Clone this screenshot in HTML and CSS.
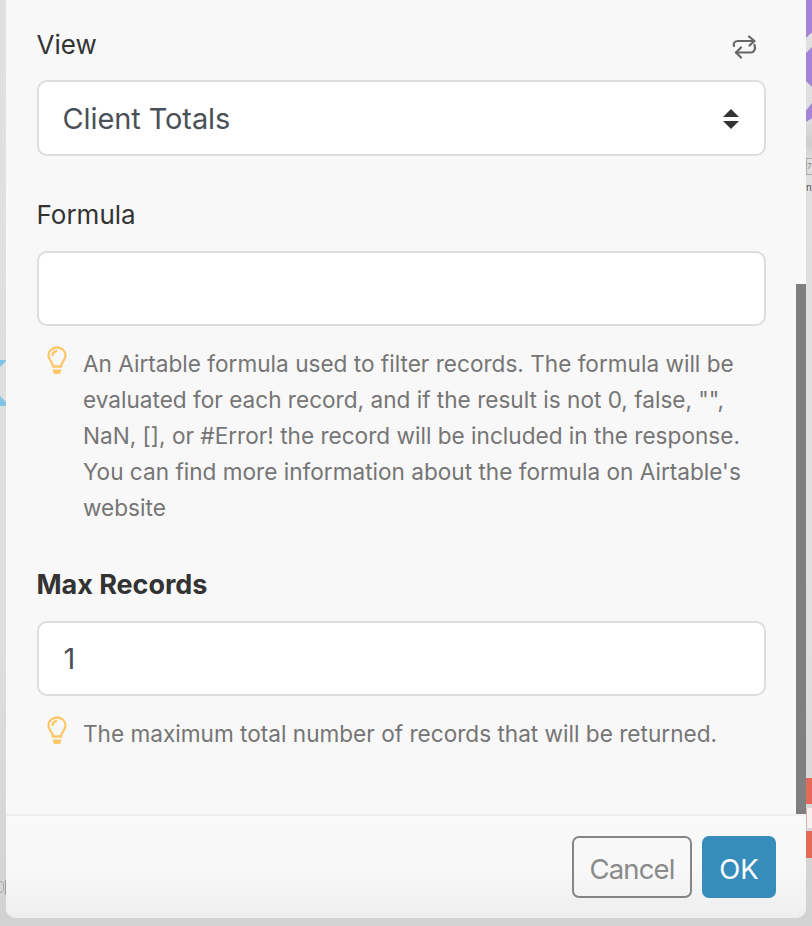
FILE: index.html
```html
<!DOCTYPE html>
<html lang="en">
<head>
<meta charset="utf-8">
<title>Airtable module settings</title>
<link rel="stylesheet" href="styles.css">
</head>
<body>
<div class="backdrop">
  <div class="deco-purple deco-p1"></div>
  <div class="deco-purple deco-p2"></div>
  <div class="deco-purple deco-p3"></div>
  <div class="deco-shade"></div>
  <div class="deco-box">7</div>
  <div class="deco-n">n</div>
  <div class="deco-red deco-r1"></div>
  <div class="deco-red-inner"></div>
  <div class="deco-red deco-r2"></div>
  <svg class="deco-blue" width="6" height="46" viewBox="0 0 6 46"><path d="M0 0H6V1L0 7Z M0 36 6 42V46H0Z" fill="#7fc4e6"/></svg>
  <div class="deco-left-o"></div>
  <div class="deco-left-text"></div>
</div>
<main class="modal">
  <div class="scrollbar"></div>
  <div class="body">
    <section class="field field-first">
      <div class="label-row">
        <label class="label">View</label>
        <svg class="refresh" width="28" height="24" viewBox="0 0 28 24" fill="none" stroke="#666" stroke-width="2.2" stroke-linecap="round" stroke-linejoin="round">
          <path d="M3 11C2 8 4 6 7 6H23"/>
          <path d="M18 1.500 23.500 6 18.500 10.500"/>
          <path d="M23.500 10C25 14 23 17.500 20 17.500H5"/>
          <path d="M10 12.500 5 17.500 10 22.500"/>
        </svg>
      </div>
      <div class="control control-select">
        <span class="value-text">Client Totals</span>
        <svg class="caret" width="16" height="20" viewBox="0 0 16 20"><path d="M8 0 16 8H0Z M0 12H16L8 20Z" fill="#333"/></svg>
      </div>
    </section>
    <section class="field field-formula">
      <label class="label">Formula</label>
      <div class="control"></div>
      <div class="help">
        <svg class="bulb" width="20" height="29" viewBox="0 0 20 29" fill="none" stroke="#fcc766" stroke-width="2.300" stroke-linecap="round"><path d="M6 20.500C6 16.500 1.500 14 1.500 9.500 1.500 4.800 5.300 1.500 10 1.500S18.500 4.800 18.500 9.500C18.500 14 14 16.500 14 20.500Z"/><path d="M5.500 9C5.800 7 7.300 5.500 9.300 5.200"/><path d="M5.500 23.500H14.500L13.500 26.800Q13 28 12 28H8Q7 28 6.500 26.800Z" fill="#fcc766" stroke="none"/></svg>
        <p>An Airtable formula used to filter records. The formula will be evaluated for each record, and if the result is not 0, false, "", NaN, [], or #Error! the record will be included in the response. You can find more information about the formula on Airtable's website</p>
      </div>
    </section>
    <section class="field field-max">
      <label class="label label-bold">Max Records</label>
      <div class="control control-number"><span>1</span></div>
      <div class="help">
        <svg class="bulb" width="20" height="29" viewBox="0 0 20 29" fill="none" stroke="#fcc766" stroke-width="2.300" stroke-linecap="round"><path d="M6 20.500C6 16.500 1.500 14 1.500 9.500 1.500 4.800 5.300 1.500 10 1.500S18.500 4.800 18.500 9.500C18.500 14 14 16.500 14 20.500Z"/><path d="M5.500 9C5.800 7 7.300 5.500 9.300 5.200"/><path d="M5.500 23.500H14.500L13.500 26.800Q13 28 12 28H8Q7 28 6.500 26.800Z" fill="#fcc766" stroke="none"/></svg>
        <p>The maximum total number of records that will be returned.</p>
      </div>
    </section>
  </div>
  <footer class="footer">
    <button class="btn btn-cancel" type="button">Cancel</button>
    <button class="btn btn-ok" type="button">OK</button>
  </footer>
</main>
</body>
</html>
```

FILE: styles.css
```css
* { box-sizing: border-box; }
html, body { margin: 0; height: 926px; overflow: hidden; }
body {
  position: relative;
  background: linear-gradient(180deg, #e0e0e0 0%, #dedede 70%, #d2d2d2 100%);
  font-family: Inter, "Liberation Sans", sans-serif;
  color: #333;
}
.backdrop { position: absolute; inset: 0; }
.deco-purple { position: absolute; right: 0; width: 6px; background: #a484d6; }
.deco-p1 { top: 0; height: 38px; clip-path: polygon(0 0, 100% 0, 100% 85%, 0 100%); }
.deco-p2 { top: 47px; height: 40px; clip-path: polygon(0 15%, 100% 0, 100% 100%, 0 85%); }
.deco-p3 { top: 103px; height: 19px; clip-path: polygon(0 40%, 100% 0, 100% 80%, 0 100%); }
.deco-shade { position: absolute; left: 806px; top: 122px; width: 6px; height: 36px; background: linear-gradient(180deg, #dcdcdc, #cdcdcd 60%, #dcdcdc); }
.deco-box { position: absolute; left: 806px; top: 158px; width: 6px; height: 17px; border: 1px solid #aaa; border-right: 0; font-size: 8px; line-height: 15px; color: #888; }
.deco-n { position: absolute; left: 806px; top: 180px; font-size: 10px; line-height: 14px; color: #555; }
.deco-red { position: absolute; left: 806px; width: 6px; background: #e46a58; }
.deco-r1 { top: 778px; height: 26px; }
.deco-r2 { top: 831px; height: 27px; }
.deco-red-inner { position: absolute; left: 806px; top: 808px; width: 6px; height: 20px; background: #f2f2f2; border-left: 1px solid #e8a79c; }
.deco-blue { position: absolute; left: 0; top: 360px; }
.deco-left-o { position: absolute; left: 0; top: 881px; width: 4px; height: 12px; border-radius: 0 6px 6px 0; border: 1px solid #aaa; border-left: 0; }
.deco-left-text { position: absolute; left: 5px; top: 880px; width: 1px; height: 15px; background: #999; }

.modal {
  position: absolute;
  left: 6px;
  top: 0;
  width: 800px;
  height: 918px;
  display: flex;
  flex-direction: column;
  background: #f8f8f8;
  border-radius: 0 0 10px 10px;
}
.scrollbar { position: absolute; right: 0; top: 284px; width: 10px; height: 530px; background: #7f7f7f; }
.body { flex: 1; padding: 0 40px 0 30.500px; }
.field { display: flex; flex-direction: column; }
.field-first { padding-top: 27px; }
.field-formula { margin-top: 41px; }
.field-max { margin-top: 41px; }
.label-row { display: flex; justify-content: space-between; align-items: center; height: 36px; margin-bottom: 17px; }
.refresh { margin: 4px 7px 0 0; }
.label { font-size: 26px; line-height: 36px; color: #333; display: block; height: 36px; margin-bottom: 18px; }
.label-row .label { margin-bottom: 0; }
.label-bold { font-size: 27px; font-weight: 700; letter-spacing: -0.05px; }
.control {
  height: 75px;
  background: #fff;
  border: 2px solid #ddd;
  border-radius: 10px;
  padding: 0 25px 0 24px;
  display: flex;
  align-items: center;
  justify-content: space-between;
  font-size: 29px;
  color: #495057;
}
.control-select { height: 76px; padding-top: 1px; }
.control-number { padding-left: 25px; }
.value-text { letter-spacing: -0.1px; }
.help { display: flex; gap: 16.500px; margin: 20px 0 0 10px; padding-right: 10px; }
.bulb { flex: none; }
.help p { margin: 0; font-size: 22.600px; line-height: 36px; color: #757575; }
.footer {
  height: 104px;
  border-top: 2px solid #efefef;
  padding: 20px 30px 20px 0;
  display: flex;
  justify-content: flex-end;
  gap: 10px;
  background: linear-gradient(180deg, #f9f9f9 0%, #f8f8f8 50%, #eeeeee 100%);
  border-radius: 0 0 10px 10px;
  position: relative;
}
.btn { height: 62px; font: inherit; font-size: 27.500px; border-radius: 7px; padding: 3px 0 0; }
.btn-cancel { width: 120px; background: transparent; border: 2px solid #858585; color: #8a8a8a; letter-spacing: -0.85px; }
.btn-ok { width: 74px; background: #368dbb; border: 0; color: #fff; }
```
